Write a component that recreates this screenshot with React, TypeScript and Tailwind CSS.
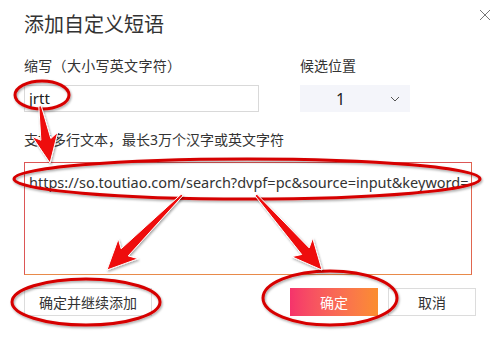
import React from 'react';

type Pt = [number, number];

// 红色标注箭头：尾细头宽
const arrowPoints = (tail: Pt, tip: Pt, headLen = 25, headHalf = 14) => {
  const dx = tip[0] - tail[0];
  const dy = tip[1] - tail[1];
  const len = Math.hypot(dx, dy);
  const ux = dx / len;
  const uy = dy / len;
  const nx = -uy;
  const ny = ux;
  const bx = tip[0] - ux * headLen;
  const by = tip[1] - uy * headLen;
  const bbx = tip[0] - ux * (headLen + 5);
  const bby = tip[1] - uy * (headLen + 5);
  const p = (x: number, y: number) => `${x.toFixed(1)},${y.toFixed(1)}`;
  return [
    p(tail[0] + nx * 1.2, tail[1] + ny * 1.2),
    p(bx + nx * 5, by + ny * 5),
    p(bbx + nx * headHalf, bby + ny * headHalf),
    p(tip[0], tip[1]),
    p(bbx - nx * headHalf, bby - ny * headHalf),
    p(bx - nx * 5, by - ny * 5),
    p(tail[0] - nx * 1.2, tail[1] - ny * 1.2),
  ].join(' ');
};

const Annotations = () => (
  <svg className="pointer-events-none absolute inset-0" width={500} height={340} viewBox="0 0 500 340">
    <defs>
      <filter id="sh" x="-20%" y="-20%" width="140%" height="140%">
        <feDropShadow dx="1" dy="1.5" stdDeviation="1.2" floodColor="#000" floodOpacity="0.35" />
      </filter>
    </defs>
    <g fill="none" stroke="#d60000" strokeWidth={3} filter="url(#sh)">
      <ellipse cx={42} cy={95} rx={27} ry={14} />
      <ellipse cx={247} cy={179} rx={233} ry={20} />
      <ellipse cx={86} cy={302} rx={74} ry={23} />
      <ellipse cx={330} cy={298} rx={67} ry={27} />
    </g>
    <g fill="#ee0808" stroke="#ffffff" strokeWidth={1} filter="url(#sh)">
      <polygon points={arrowPoints([40, 106], [50, 163], 24, 13)} />
      <polygon points={arrowPoints([182, 195], [107, 270])} />
      <polygon points={arrowPoints([256, 195], [322, 270])} />
    </g>
  </svg>
);

export default function App() {
  return (
    <div
      className="relative h-[340px] w-[500px] overflow-hidden bg-white text-[#333]"
      style={{ fontFamily: '"Noto Sans", "Noto Sans CJK SC", sans-serif' }}
    >
      {/* 关闭 */}
      <svg className="absolute left-[479px] top-[9px]" width="12" height="12" viewBox="0 0 12 12">
        <path d="M1 1L11 11M11 1L1 11" stroke="#777" strokeWidth="1" />
      </svg>

      <div className="flex flex-col px-6 pt-[11px]">
        <h2 className="h-[28px] text-[20px] leading-[28px] font-normal text-[#333]">添加自定义短语</h2>

        <div className="mt-[17px] flex gap-[41px]">
          <div className="flex w-[235px] flex-col">
            <label className="h-5 text-[14px] leading-5 tracking-[0.3px] text-[#333]">缩写（大小写英文字符）</label>
            <div className="mt-[9px] flex h-[27px] items-center border border-[#d9d9d9] px-[4px] text-[15px] text-[#222]">
              jrtt
            </div>
          </div>
          <div className="flex w-[110px] flex-col">
            <label className="h-5 text-[14px] leading-5 text-[#333]">候选位置</label>
            <div className="mt-[9px] flex h-[27px] items-center bg-[#f4f5fa] text-[16px] text-[#222]">
              <span className="flex-1 pl-[36px]">1</span>
              <svg className="mr-[10px]" width="10" height="6" viewBox="0 0 10 6">
                <path d="M1 1L5 5L9 1" fill="none" stroke="#555" strokeWidth="1" />
              </svg>
            </div>
          </div>
        </div>

        <p className="mt-[18px] h-5 text-[14px] leading-5 text-[#333]">支持多行文本，最长3万个汉字或英文字符</p>

        <div className="mt-[12px] h-[113px] w-[448px] border border-t-[#dc5656] border-l-[#dc5656] border-r-[#e0664f] border-b-[#e88a4a] px-[4px] pt-[9px] text-[14.5px] leading-5 whitespace-nowrap text-[#333]">
          https://so.toutiao.com/search?dvpf=pc&amp;source=input&amp;keyword=
        </div>

        <div className="mt-[13px] flex items-center">
          <button className="h-[28px] w-[128px] border border-[#dcdcdc] bg-white text-[14px] text-[#333]">确定并继续添加</button>
          <div className="ml-auto flex gap-[10px]">
            <button className="h-[28px] w-[88px] bg-gradient-to-r from-[#f5336b] to-[#fb8d2e] text-[14px] text-white">确定</button>
            <button className="h-[28px] w-[88px] border border-[#dcdcdc] bg-white text-[14px] text-[#333]">取消</button>
          </div>
        </div>
      </div>

      <Annotations />
    </div>
  );
}
